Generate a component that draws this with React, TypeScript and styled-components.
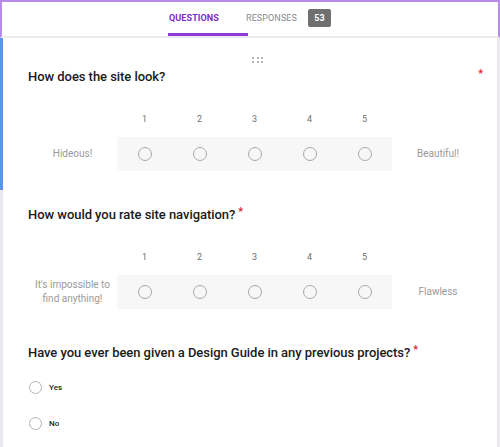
import React from 'react'
import styled, { createGlobalStyle } from 'styled-components'

const GlobalStyle = createGlobalStyle`
  html, body {
    margin: 0;
    padding: 0;
    background: #fff;
  }
  body {
    font-family: Roboto, "Liberation Sans", Arial, sans-serif;
  }
`

const Frame = styled.div`
  width: 500px;
  height: 447px;
  overflow: hidden;
  box-sizing: border-box;
  background: #fff;
`

const Header = styled.div`
  height: 38px;
  box-sizing: border-box;
  border-top: 2px solid #b98be6;
  border-left: 2px solid #b98be6;
  border-right: 2px solid #b98be6;
  border-bottom: 2px solid #ebebeb;
  display: flex;
  align-items: stretch;
  padding-left: 166px;
`

const Tab = styled.div<{ $active?: boolean }>`
  display: flex;
  align-items: center;
  box-sizing: border-box;
  width: ${(p) => (p.$active ? '80px' : 'auto')};
  padding-left: ${(p) => (p.$active ? '1px' : '0')};
  margin-right: ${(p) => (p.$active ? '-2px' : '0')};
  border-bottom: 3px solid ${(p) => (p.$active ? '#8f3bd9' : 'transparent')};
  font-size: 9px;
  font-weight: ${(p) => (p.$active ? 700 : 400)};
  color: ${(p) => (p.$active ? '#7b2dcf' : '#8a8a8a')};
  letter-spacing: 0.1px;
`

const Badge = styled.span`
  display: inline-flex;
  align-items: center;
  justify-content: center;
  width: 23px;
  height: 18px;
  margin-left: 11px;
  border-radius: 2px;
  background: #6f6f6f;
  color: #fff;
  font-size: 9px;
  font-weight: 700;
`

const Body = styled.div`
  border-right: 3px solid #ece7f1;
  height: 409px;
  box-sizing: border-box;
`

const Card = styled.div<{ $active?: boolean }>`
  box-sizing: border-box;
  border-left: 3px solid ${(p) => (p.$active ? '#5b95f0' : '#ece7f1')};
  padding: 17px 13px 19px 25px;
`

const DragRow = styled.div`
  height: 10px;
  margin-bottom: 4px;
  display: flex;
  justify-content: center;
  align-items: center;
  padding-left: 3px;
`

const Dots = styled.div`
  display: grid;
  grid-template-columns: repeat(3, 2px);
  gap: 2px 2.5px;
  span {
    width: 2px;
    height: 2px;
    background: #b5b5b5;
  }
`

const TitleRow = styled.div`
  display: flex;
  align-items: flex-start;
  height: 16px;
  line-height: 16px;
  font-size: 13px;
  font-weight: 500;
  color: #1a1a1a;
  letter-spacing: -0.05px;
`

const Title = styled.span`
  flex: 0 1 auto;
`

const Required = styled.span<{ $right?: boolean }>`
  color: #e0201b;
  font-size: 11px;
  line-height: 10px;
  margin-left: ${(p) => (p.$right ? 'auto' : '3px')};
  margin-right: ${(p) => (p.$right ? '1px' : '0')};
`

const Scale = styled.div`
  display: grid;
  grid-template-columns: 89px repeat(5, 55px) 92px;
  grid-template-rows: 12px 34px;
  row-gap: 12px;
  margin-top: 28px;
`

const Num = styled.div`
  font-size: 9px;
  line-height: 12px;
  color: #6f6f6f;
  text-align: center;
`

const SideLabel = styled.div`
  grid-row: 2;
  display: flex;
  align-items: center;
  justify-content: center;
  text-align: center;
  font-size: 10px;
  line-height: 14px;
  color: #9a9a9a;
`

const Band = styled.div`
  grid-row: 2;
  grid-column: 2 / span 5;
  display: grid;
  grid-template-columns: repeat(5, 55px);
  background: #f7f7f7;
`

const Cell = styled.div`
  display: flex;
  align-items: center;
  justify-content: center;
`

const Radio = styled.span`
  display: inline-block;
  box-sizing: border-box;
  width: 14px;
  height: 14px;
  border-radius: 50%;
  border: 1.5px solid #a9a9a9;
`

const Options = styled.div`
  display: flex;
  flex-direction: column;
  gap: 16px;
  margin-top: 16px;
`

const Option = styled.div`
  display: flex;
  align-items: center;
  height: 20px;
  padding-left: 1px;
  font-size: 8px;
  font-weight: 500;
  color: #1a1a1a;
  ${Radio} {
    width: 13px;
    height: 13px;
    border-color: #b3b3b3;
    margin-right: 7px;
  }
`

type ScaleProps = { low: React.ReactNode; high: string }

const ScaleQuestion = ({ low, high }: ScaleProps) => (
  <Scale>
    {[1, 2, 3, 4, 5].map((n) => (
      <Num key={n} style={{ gridColumn: n + 1 }}>
        {n}
      </Num>
    ))}
    <SideLabel style={{ gridColumn: 1 }}>{low}</SideLabel>
    <Band>
      {[1, 2, 3, 4, 5].map((n) => (
        <Cell key={n}>
          <Radio />
        </Cell>
      ))}
    </Band>
    <SideLabel style={{ gridColumn: 7 }}>{high}</SideLabel>
  </Scale>
)

const App = () => {
  return (
    <Frame>
      <GlobalStyle />
      <Header>
        <Tab $active>QUESTIONS</Tab>
        <Tab>
          RESPONSES
          <Badge>53</Badge>
        </Tab>
      </Header>
      <Body>
        <Card $active>
          <DragRow>
            <Dots>
              {Array.from({ length: 6 }).map((_, i) => (
                <span key={i} />
              ))}
            </Dots>
          </DragRow>
          <TitleRow>
            <Title>How does the site look?</Title>
            <Required $right>*</Required>
          </TitleRow>
          <ScaleQuestion low="Hideous!" high="Beautiful!" />
        </Card>
        <Card>
          <TitleRow>
            <Title>How would you rate site navigation?</Title>
            <Required>*</Required>
          </TitleRow>
          <ScaleQuestion
            low={
              <>
                It's impossible to
                <br />
                find anything!
              </>
            }
            high="Flawless"
          />
        </Card>
        <Card>
          <TitleRow>
            <Title>Have you ever been given a Design Guide in any previous projects?</Title>
            <Required>*</Required>
          </TitleRow>
          <Options>
            <Option>
              <Radio />
              Yes
            </Option>
            <Option>
              <Radio />
              No
            </Option>
          </Options>
        </Card>
      </Body>
    </Frame>
  )
}

export default App
